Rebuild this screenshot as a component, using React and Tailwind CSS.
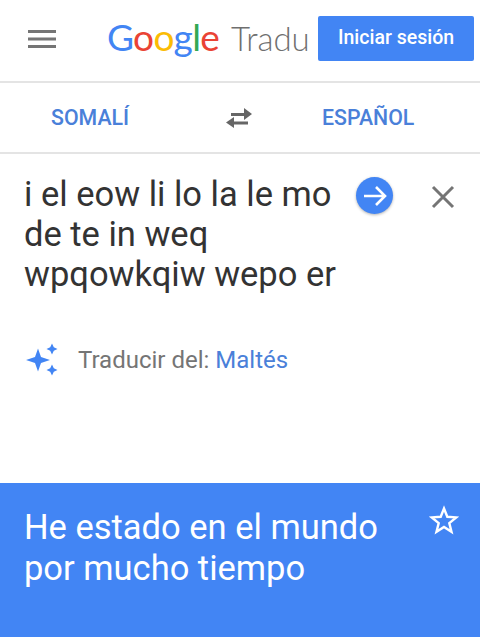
const roboto = { fontFamily: 'Roboto, sans-serif' };

const Logo = () => (
  <div className="flex items-baseline w-[204px] whitespace-nowrap font-['Lato',sans-serif]">
    <span className="text-[37px] leading-[44px] font-normal tracking-[-0.7px]">
      <span className="text-[#4285f4]">G</span>
      <span className="text-[#ea4335]">o</span>
      <span className="text-[#fbbc05]">o</span>
      <span className="text-[#4285f4]">g</span>
      <span className="text-[#34a853]">l</span>
      <span className="text-[#ea4335]">e</span>
    </span>
    <span className="ml-[12px] text-[33px] leading-[44px] text-[#6f6f6f] font-light">Tradu</span>
  </div>
);

const MenuIcon = () => (
  <svg width="28" height="20" viewBox="0 0 28 20" fill="#757575">
    <rect x="0" y="1" width="28" height="3" />
    <rect x="0" y="8.500" width="28" height="3" />
    <rect x="0" y="16" width="28" height="3" />
  </svg>
);

const SwapIcon = () => (
  <svg width="26" height="20" viewBox="0 0 26 20" fill="#666">
    <path d="M18 0l8 6-8 6V8H5V5h13z" />
    <path d="M8 9v4.500h14v3H8V20l-8-5.500z" />
  </svg>
);

const Sparkles = () => (
  <svg width="36" height="34" viewBox="0 0 36 34" fill="#4285f4">
    <path d="M14 5.500l3 8.500 9 3-9 3-3 8.500-3-8.500-9-3 9-3z" />
    <path d="M28 .5l1.800 3.700 3.700 1.800-3.700 1.800L28 11.500l-1.800-3.700L22.500 6l3.700-1.800z" />
    <path d="M28 21.500l1.800 3.700 3.700 1.800-3.700 1.800L28 32.500l-1.800-3.700-3.700-1.800 3.700-1.800z" />
  </svg>
);

const CloseIcon = () => (
  <svg width="40" height="40" viewBox="0 0 40 40" fill="none" stroke="#757575" strokeWidth="3">
    <path d="M10 10l20 20M30 10L10 30" />
  </svg>
);

const StarIcon = () => (
  <svg width="30" height="30" viewBox="0 0 30 30" fill="none" stroke="white" strokeWidth="2.400">
    <path d="M15 3.500l3.300 8.300 8.900.6-6.900 5.700 2.200 8.700-7.500-4.800-7.500 4.800 2.200-8.700-6.900-5.700 8.900-.6z" />
  </svg>
);

export default function App() {
  return (
    <div className="w-[480px] h-[637px] flex flex-col bg-white overflow-hidden" style={roboto}>
      <header className="h-[83px] shrink-0 flex items-center border-b-2 border-[#e4e4e4] bg-white">
        <div className="ml-[28px] mt-[-4px] flex">
          <MenuIcon />
        </div>
        <div className="ml-[51px] mt-[-6px]">
          <Logo />
        </div>
        <button className="ml-[7px] mt-[-4px] w-[156px] h-[45px] shrink-0 rounded-[2px] bg-[#4285f4] text-white text-[19.500px] font-medium pb-[2px]">
          Iniciar sesión
        </button>
      </header>

      <div className="h-[71px] shrink-0 flex items-center border-b-2 border-[#e4e4e4] text-[21.300px] font-medium text-[#4a80d9]">
        <span className="ml-[51px] w-[175px]">SOMALÍ</span>
        <SwapIcon />
        <span className="ml-[70px]">ESPAÑOL</span>
      </div>

      <main className="flex-1 flex flex-col pl-[24px] pr-[17px] pt-[20px]">
        <div className="flex items-start">
          <p className="w-[320px] shrink-0 text-[34.500px] leading-[40px] text-[#333]">
            i el eow li lo la le mo de te in weq wpqowkqiw wepo er
          </p>
          <div className="ml-[12px] mt-[3px] w-[37px] h-[37px] shrink-0 rounded-full bg-[#4285f4] flex items-center justify-center shadow-[0_1px_3px_rgba(0,0,0,0.3)]">
            <svg width="28" height="28" viewBox="0 0 28 28" fill="none" stroke="white" strokeWidth="2.600">
              <path d="M3 14h21M15 5l9 9-9 9" />
            </svg>
          </div>
          <div className="ml-[30px] mt-[3px] shrink-0 flex">
            <CloseIcon />
          </div>
        </div>
        <div className="mt-[48px] flex items-center">
          <Sparkles />
          <span className="ml-[18px] text-[24px] text-[#757575]">
            Traducir del: <span className="text-[#4a80d9]">Maltés</span>
          </span>
        </div>
      </main>

      <section className="h-[154px] shrink-0 bg-[#4285f4] flex items-start pl-[24px] pt-[24px] pr-[21px] text-white">
        <p className="w-[385px] text-[34.500px] leading-[41px]">He estado en el mundo por mucho tiempo</p>
        <div className="ml-auto mt-[-2px] flex">
          <StarIcon />
        </div>
      </section>
    </div>
  );
}
